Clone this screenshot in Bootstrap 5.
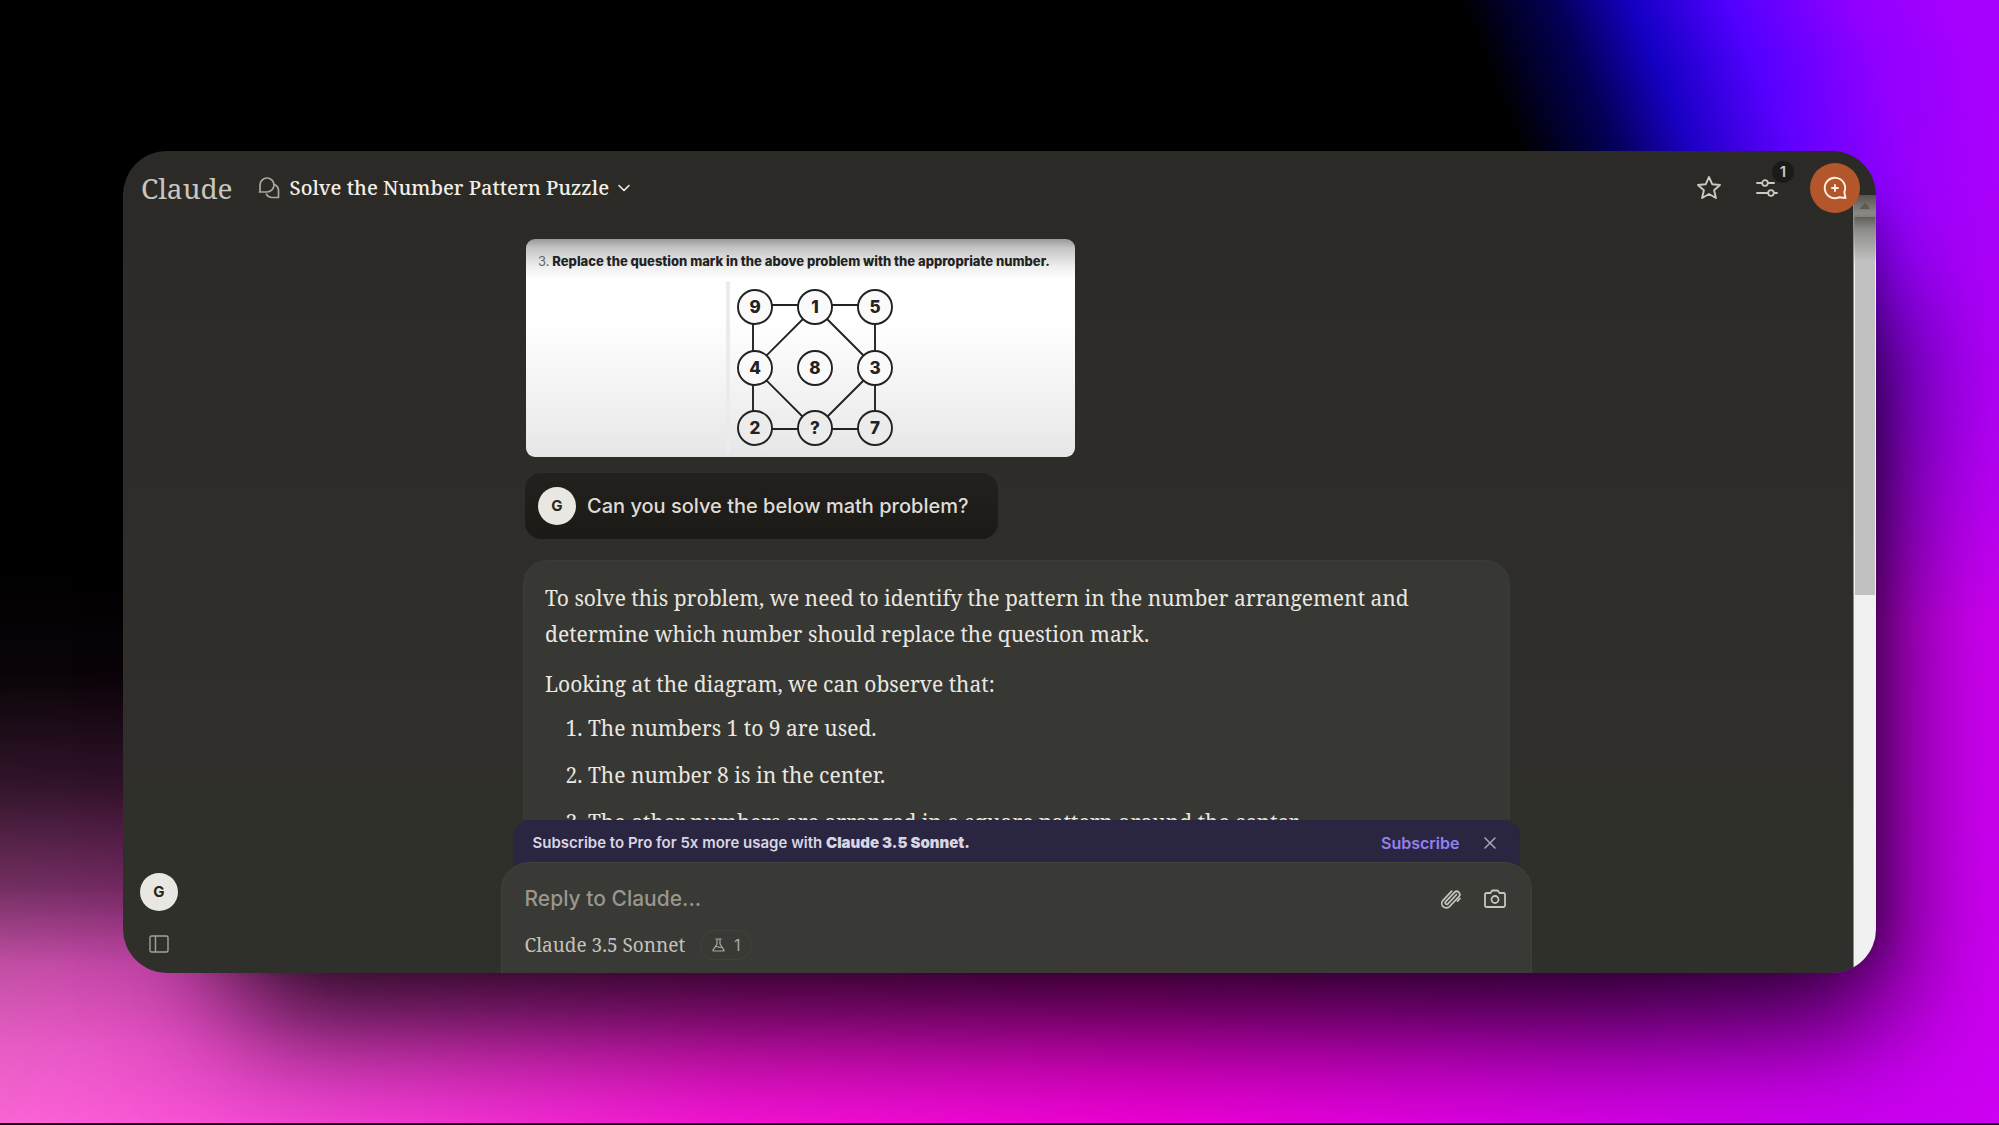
<!DOCTYPE html>
<html lang="en" data-bs-theme="dark">
<head>
<meta charset="utf-8">
<meta name="viewport" content="width=device-width, initial-scale=1">
<title>Claude – Solve the Number Pattern Puzzle</title>
<link href="https://cdn.jsdelivr.net/npm/bootstrap@5.3.0/dist/css/bootstrap.min.css" rel="stylesheet">
<style>
  :root { --serif: "Noto Serif", "Liberation Serif", serif; --sans: Inter, "Liberation Sans", sans-serif; }
  body {
    font-family: var(--sans); color: #e8e6df; padding: 151px 123px 150px;
    border-bottom: 2px solid #140a14; isolation: isolate; position: relative;
    background: linear-gradient(68deg, #000 78%, #04005a 82%, #1400c4 85%, #5200ff 89%, #9000ff 94%, #a600ff 98%);
  }
  .wash { position: absolute; inset: 0; z-index: -1; }
  .wash-side { background: linear-gradient(90deg, transparent 80%, #cc00f0 94%); -webkit-mask-image: linear-gradient(transparent 5%, #000 55%); mask-image: linear-gradient(transparent 5%, #000 55%); }
  .wash-floor { background: linear-gradient(96deg, #f56fce 0%, #fb5fd6 8%, #f545d4 20%, #f612d6 40%, #f000d8 60%, #d800e6 80%, #cc00f2 94%);
    -webkit-mask-image: linear-gradient(transparent 50%, rgb(0 0 0/.04) 60%, rgb(0 0 0/.2) 70%, rgb(0 0 0/.46) 79%, rgb(0 0 0/.78) 86%, rgb(0 0 0/.92) 93%, #000 100%);
    mask-image: linear-gradient(transparent 50%, rgb(0 0 0/.04) 60%, rgb(0 0 0/.2) 70%, rgb(0 0 0/.46) 79%, rgb(0 0 0/.78) 86%, rgb(0 0 0/.92) 93%, #000 100%); }
  .app-window { min-height: 0; background: linear-gradient(#2c2a27, #2f2e2a 60%, #2f302b); border-radius: 44px; box-shadow: 65px 100px 110px -50px rgb(0 0 0/.8), 40px 20px 40px -40px rgb(0 0 0/.35); }
  .plain { background: none; border: 0; padding: 0; color: inherit; display: inline-flex; align-items: center; }
  .topbar { height: 74px; padding: 0 16px 0 18px; z-index: 3; }
  .brand { font: 28px/1 var(--serif); color: #c9c6be; text-decoration: none; }
  .chat-title { font: 500 20px/1 var(--serif); color: #f1efe8; gap: 9px; }
  .tools { color: #cbc9c2; }
  .tune { margin: 0 32px 0 34px; }
  .new-chat { width: 50px; height: 50px; background: #b4562c; color: #fff0e0; }
  .count-badge { width: 22px; height: 22px; background: #1b1a18; color: #c9c7c0; font-size: 15px; font-weight: 600; left: 16px; top: -17px; }
  .rail { width: 56px; padding: 0 0 20px 16px; gap: 24px; color: #a3a199; }
  .initial { width: 38px; height: 38px; background: #e8e7e1; color: #26261f; font-weight: 700; font-size: 15px; }
  .fill { min-height: 0; min-width: 0; }
  .thread { padding: 14px 22px 0 23px; width: 1032px; max-width: 100%; }
  .puzzle { width: 549px; height: 218px; margin-left: 3px; border-radius: 9px; color: #222;
    background: linear-gradient(#999 0, #c4c4c4 9px, #efefef 28px, #fff 40px, #fff 80px, #ececec 190px, #e6e6e6); padding-top: 13px; }
  .puzzle-head { font-size: 13px; line-height: 18px; font-weight: 800; margin: 0 0 0 12px; white-space: nowrap; }
  .puzzle-head span { font-weight: 400; color: #666; }
  .ask { background: linear-gradient(#23211e, #1b1a16); border-radius: 16px; width: 473px; height: 66px; margin: 16px 0 21px 2px; padding-left: 13px; gap: 11px; font-size: 20px; font-weight: 500; color: #dedcd5; }
  .answer { background: #373733; border: 1px solid #3b3b37; border-radius: 24px; padding: 19px 21px 60px; font: 21px/36px var(--serif); color: #e9e7e0; }
  .answer p { margin-bottom: 14px; }
  .answer ol { padding-left: 43px; margin: -6px 0 0; }
  .answer li { margin-bottom: 11px; }
  .promo { background: #2a2540; border-radius: 16px 16px 0 0; width: 1007px; max-width: 100%; height: 66px; margin-bottom: -24px; padding: 0 22px 20px 20px; font-size: 15px; font-weight: 600; color: #d8d5e4; }
  .promo a { color: #9580f0; font-weight: 600; font-size: 16px; text-decoration: none; margin-right: 22px; }
  .composer { background: #393936; border: 1px solid #40403c; border-bottom: 0; border-radius: 28px 28px 0 0; width: 1031px; max-width: 100%; height: 111px; padding: 19px 25px 0 23px; z-index: 1; color: #c8c6be; }
  .composer input { background: none; border: 0; outline: 0; font-size: 21px; font-weight: 500; line-height: 34px; height: 34px; padding: 0; color: #e8e6df; }
  .composer input::placeholder { color: #99968b; opacity: 1; }
  .attach { margin-right: 22px; }
  .model-row { gap: 15px; margin-top: 14px; }
  .model { font: 19px/24px var(--serif); color: #c4c2ba; }
  .beta { border: 1px solid #42423e; width: 52px; height: 30px; font-size: 16px; gap: 9px; color: #a9a79f; }
  .track { width: 23px; margin-top: -30px; background: linear-gradient(#55544f, #8a8984 18px, #7c7b76 24px, #9a9a98 40px, #f1f1f1 70px); border-left: 1px solid #8d8c84; padding: 8px 1px 0; color: #5c5b57; }
  .thumb { background: linear-gradient(#5f5e5b, #8b8b89 12px, #c1c1c1 44px); height: 378px; margin-top: 8px; }
  svg { display: block; fill: none; stroke: currentColor; stroke-linecap: round; stroke-linejoin: round; }
  .puzzle text { fill: #222; stroke: none; font: 800 17px var(--sans); text-anchor: middle; }
</style>
</head>
<body class="vh-100 d-flex flex-column overflow-hidden">
<div class="wash wash-side"></div>
<div class="wash wash-floor"></div>
<div class="app-window flex-grow-1 d-flex flex-column overflow-hidden">
  <header class="topbar d-flex align-items-center position-relative flex-shrink-0">
    <a class="brand" href="#">Claude</a>
    <button class="plain chat-title ms-4" type="button">
      <svg width="24" height="24" viewBox="0 0 24 24" stroke-width="1.7" color="#aaa8a0"><path d="M3 15.500V9a7 7 0 1 1 7 7H2.500z"/><path d="M17.500 8.600a6.500 6.500 0 0 1 4 6V21.500h-6.500a6.500 6.500 0 0 1-5.700-3.300"/></svg>
      <span>Solve the Number Pattern Puzzle</span>
      <svg width="12" height="8" viewBox="0 0 12 8" stroke-width="1.600"><path d="M1 1.500 6 6.500l5-5"/></svg>
    </button>
    <div class="tools ms-auto d-flex align-items-center">
      <button class="plain" type="button" aria-label="Star"><svg width="26" height="26" viewBox="0 0 26 26" stroke-width="1.900"><path d="m13 2 3.200 7.200 7.800.8-5.900 5.200 1.800 7.800L13 19l-6.900 4 1.800-7.800L2 10l7.800-.8z"/></svg></button>
      <button class="plain tune position-relative" type="button" aria-label="Settings"><svg width="22" height="20" viewBox="0 0 22 20" stroke-width="1.800"><path d="M1 5h5M12 5h6M1 15h11M18 15h3"/><circle cx="9" cy="5" r="2.800"/><circle cx="15" cy="15" r="2.800"/></svg>
        <span class="count-badge position-absolute rounded-circle d-flex align-items-center justify-content-center">1</span></button>
      <button class="plain new-chat rounded-circle justify-content-center" type="button" aria-label="New chat"><svg width="26" height="26" viewBox="0 0 26 26" stroke-width="1.900"><path d="M22.300 17A10.200 10.200 0 1 0 17 22.300l6.500.7z" /><path d="M13 10v6M10 13h6"/></svg></button>
    </div>
  </header>
  <div class="fill d-flex flex-grow-1">
    <nav class="rail d-flex flex-column align-items-center justify-content-end flex-shrink-0">
      <button class="plain initial rounded-circle justify-content-center" type="button">G</button>
      <button class="plain" type="button" aria-label="Toggle sidebar"><svg width="20" height="18" viewBox="0 0 20 18" stroke-width="1.400"><rect x="1" y="1" width="18" height="16" rx="1.500"/><path d="M6.500 1v16"/></svg></button>
    </nav>
    <main class="fill flex-grow-1 d-flex flex-column align-items-center">
      <section class="fill thread flex-grow-1 overflow-hidden">
        <figure class="puzzle">
          <p class="puzzle-head"><span>3.</span> Replace the question mark in the above problem with the appropriate number.</p>
          <svg width="549" height="187" viewBox="0 31 549 187" stroke="#444" stroke-width="1.900">
            <path d="M202 44v168" stroke="#e9ebef" stroke-width="4"/>
            <path d="M227 66h122v124H227zM289 68l-61 61 61 61 61-61z"/>
            <g fill="#fafafa"><circle cx="229" cy="68" r="17"/><circle cx="289" cy="68" r="17"/><circle cx="349" cy="68" r="17"/><circle cx="229" cy="129" r="17"/><circle cx="289" cy="129" r="17"/><circle cx="349" cy="129" r="17"/></g>
            <g fill="#ececec"><circle cx="229" cy="189" r="17"/><circle cx="289" cy="189" r="17"/><circle cx="349" cy="189" r="17"/></g>
            <text x="229" y="74">9</text><text x="289" y="74">1</text><text x="349" y="74">5</text>
            <text x="229" y="135">4</text><text x="289" y="135">8</text><text x="349" y="135">3</text>
            <text x="229" y="195">2</text><text x="289" y="195">?</text><text x="349" y="195">7</text>
          </svg>
        </figure>
        <div class="ask d-flex align-items-center"><span class="initial rounded-circle d-flex align-items-center justify-content-center">G</span>Can you solve the below math problem?</div>
        <article class="answer">
          <p>To solve this problem, we need to identify the pattern in the number arrangement and determine which number should replace the question mark.</p>
          <p>Looking at the diagram, we can observe that:</p>
          <ol><li>The numbers 1 to 9 are used.</li><li>The number 8 is in the center.</li><li>The other numbers are arranged in a square pattern around the center.</li></ol>
        </article>
      </section>
      <aside class="promo d-flex align-items-center flex-shrink-0">
        <span>Subscribe to Pro for 5x more usage with <b>Claude 3.5 Sonnet.</b></span>
        <a class="ms-auto" href="#">Subscribe</a>
        <button class="plain" type="button" aria-label="Dismiss"><svg width="16" height="16" viewBox="0 0 16 16" stroke-width="1.500" color="#aaa6b8"><path d="m3 3 10 10M13 3 3 13"/></svg></button>
      </aside>
      <form class="composer position-relative flex-shrink-0">
        <div class="d-flex align-items-center">
          <input class="flex-grow-1" type="text" aria-label="Reply to Claude" placeholder="Reply to Claude...">
          <button class="plain attach" type="button" aria-label="Attach file"><svg width="22" height="22" viewBox="0 0 22 22" stroke-width="1.700"><path d="m16.500 6.500-8.600 9.300a1.500 1.500 0 0 1-2.200-2.100l8.800-9.300a3 3 0 0 1 4.400 4.200l-9.300 9.900a4.500 4.500 0 0 1-6.600-6.200l8.700-9.200M20 10.500l-2.500 2.600"/></svg></button>
          <button class="plain" type="button" aria-label="Take photo"><svg width="22" height="22" viewBox="0 0 22 22" stroke-width="1.800"><path d="M2.500 5h4l1.700-2.500h5.600L15.500 5h4A1.500 1.500 0 0 1 21 6.500v11a1.500 1.500 0 0 1-1.500 1.500h-17A1.500 1.500 0 0 1 1 17.500v-11A1.500 1.500 0 0 1 2.500 5z"/><circle cx="11" cy="11.500" r="3.500"/></svg></button>
        </div>
        <div class="model-row d-flex align-items-center">
          <button class="plain model" type="button">Claude 3.5 Sonnet</button>
          <button class="plain beta rounded-pill justify-content-center" type="button"><svg width="13" height="14" viewBox="0 0 13 14" stroke-width="1.200"><path d="M4 1h5M5 1v5L1 12.200q-.3.800.6.800h9.800q.9 0 .6-.8L8 6V1M3 9q2-1 3.500 0T10 9"/></svg>1</button>
        </div>
      </form>
    </main>
    <div class="track flex-shrink-0">
      <svg class="mx-auto" width="10" height="6" viewBox="0 0 10 6" stroke="none"><path d="M0 6 5 0l5 6z" fill="#5c5b57"/></svg>
      <div class="thumb"></div>
    </div>
  </div>
</div>
<script src="https://cdn.jsdelivr.net/npm/bootstrap@5.3.0/dist/js/bootstrap.bundle.min.js"></script>
</body>
</html>
